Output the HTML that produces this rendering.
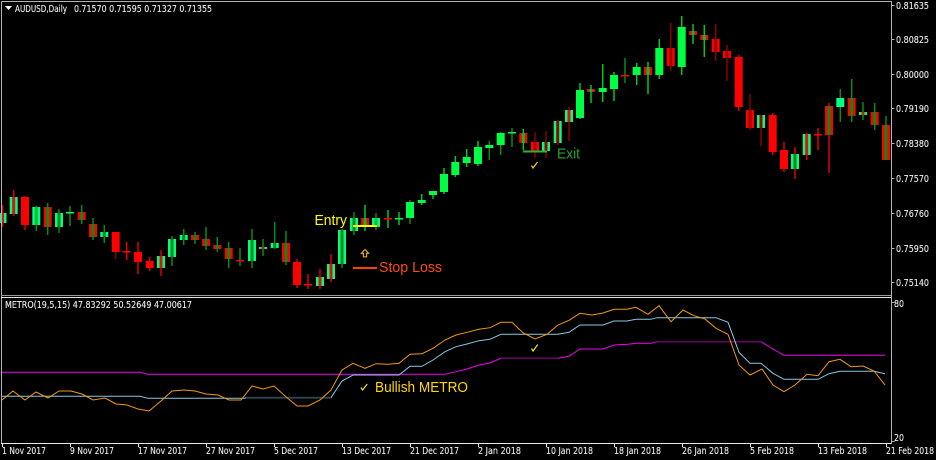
<!DOCTYPE html>
<html lang="en">
<head>
<meta charset="utf-8">
<title>AUDUSD Daily</title>
<style>
html,body{margin:0;padding:0;background:#000;width:936px;height:460px;overflow:hidden}
svg{display:block}
.t{font-family:"DejaVu Sans","Liberation Sans",sans-serif;font-size:9.3px;fill:#ececec;stroke:#ececec;stroke-width:.12}
.a{font-family:"Liberation Sans",sans-serif;font-size:15px}
</style>
</head>
<body>
<svg width="936" height="460" viewBox="0 0 936 460" xmlns="http://www.w3.org/2000/svg">
<rect width="936" height="460" fill="#000"/>

<!-- wicks -->
<g fill="none" stroke-width="1.5">
<path stroke="#e00000" d="M2.5 205V227M13.7 190V216M25 196V230M126.7 242V260M138 242V274M149.7 257V271M161 250V276M297 259V288M308 274V289M320 269V289M331 254V282M738.7 55V111M772.7 113V155M784 142V172M795 147V179M806.7 133V160M818 128V150M829 103V173"/>
<path stroke="#0b8a14" d="M36.3 206V231M47.7 203V235M59 209V233M70 206V226M81.7 205V224M93 218V240M104.3 225V243M172 236V266M183.7 229V245M195 232V244M206 227V250M217.3 237V252M228.7 242V268M240 248V266M252 229V268M263 239V256M274.7 222V249M286 231V265M342 229V268M354 212V235M376 213V230M410 200V224M489.3 141V160M500.7 132V155M512 128V147M625 58V83M840.3 89V122M851.7 79V122M863 102V120M874.7 103V130M886 116V160"/>
<path stroke="#00c81e" d="M365 205V231M388 210V228M399 212V225M421.7 194V205M433 191V199M444 168V194M455.3 156V177M466.7 149V167M478 141V166M523.3 129V150M580 83V119M591 85V103M602.7 64V102M614 72V101M636.7 63V85M648 62V94M659.3 39V79M681.7 16V75M693 24V44M704.3 25V57"/>
<path stroke="#8a0000" d="M115.7 232V259M535 132V158M546 131V158M557.7 120V145M569 107V141M670.7 23V71M715.7 24V61M727 45V81M750 94V130M761 115V146"/>
</g>

<!-- bodies -->
<path fill="#00ff44" d="M406 202h8V218h-8zM417.7 200h8V203h-8zM429 191h8V195h-8zM440 174h8V192h-8zM451.3 162h8V175h-8zM462.7 157h8V163h-8zM474 147h8V164h-8zM485.3 145h8V148h-8zM496.7 133h8V145h-8zM576 90h8V118h-8zM598.7 88h8V92h-8zM610 75h8V89h-8zM632.7 67h8V75h-8zM655.3 48h8V75h-8zM677.7 27h8V67h-8zM66 212h8V213.5h-8zM508 132h8V133.5h-8zM395 218h8V219.5h-8z"/>
<path fill="#00ff80" d="M-1.5 213h8V223h-8zM9.7 197h8V214h-8zM32.3 207h8V225h-8zM55 213h8V227h-8zM100.3 232h8V237h-8zM157 256h8V268h-8zM168 239h8V257h-8zM179.7 235h8V240h-8zM248 240h8V261h-8zM259 247h8V249h-8zM270.7 243h8V248h-8zM316 277h8V286h-8zM327 264h8V279h-8zM338 230h8V264h-8zM350 218h8V231h-8zM372 218h8V227h-8zM542 142h8V151h-8zM553.7 121h8V143h-8zM565 110h8V122h-8zM757 115h8V128h-8zM791 154h8V169h-8zM802.7 134h8V155h-8zM836.3 98h8V107h-8zM859 112h8V115h-8z"/>
<path fill="#ff0000" d="M21 197h8V225h-8zM43.7 207h8V227h-8zM77.7 212h8V220h-8zM89 224h8V237h-8zM111.7 232h8V252h-8zM134 252h8V262h-8zM145.7 261h8V268h-8zM191 235h8V240h-8zM202 239h8V246h-8zM213.3 245h8V249h-8zM224.7 248h8V259h-8zM282 243h8V262h-8zM293 262h8V285h-8zM361 218h8V226h-8zM519.3 133h8V143h-8zM531 142h8V151h-8zM587 89h8V92h-8zM644 67h8V75h-8zM666.7 48h8V66h-8zM689 31h8V35h-8zM700.3 35h8V40h-8zM711.7 39h8V52h-8zM723 51h8V58h-8zM734.7 57h8V107h-8zM746 110h8V128h-8zM768.7 115h8V152h-8zM780 150h8V169h-8zM825 106h8V135h-8zM847.7 98h8V116h-8zM870.7 112h8V125h-8zM882 125h8V160h-8zM122.7 251h8V252.5h-8zM236 260h8V261.5h-8zM304 284h8V285.5h-8zM384 218h8V219.5h-8zM621 75h8V76.5h-8zM814 134h8V135.5h-8z"/>

<!-- centre stripes -->
<path fill="#0a8a18" d="M46.2 207h3V227h-3zM57.5 213h3V227h-3zM80.2 212h3V220h-3zM91.5 224h3V237h-3zM102.8 232h3V237h-3zM170.5 239h3V257h-3zM182.2 235h3V240h-3zM193.5 235h3V240h-3zM204.5 239h3V246h-3zM215.8 245h3V249h-3zM227.2 248h3V259h-3zM250.5 240h3V261h-3zM273.2 243h3V248h-3zM284.5 243h3V262h-3zM340.5 230h3V264h-3zM352.5 218h3V231h-3zM793.5 154h3V169h-3zM827.5 106h3V135h-3zM850.2 98h3V116h-3zM873.2 112h3V125h-3zM884.5 125h3V160h-3z"/>
<path fill="#00c030" d="M34.8 207h3V225h-3zM374.5 218h3V227h-3zM363.5 218h3V226h-3zM521.8 133h3V143h-3zM589.5 89h3V92h-3zM646.5 67h3V75h-3zM691.5 31h3V35h-3zM702.8 35h3V40h-3z"/>
<path fill="#e01010" d="M1 213h3V223h-3zM12.2 197h3V214h-3zM159.5 256h3V268h-3zM261.5 247h3V249h-3zM318.5 277h3V286h-3zM329.5 264h3V279h-3zM567.5 110h3V122h-3zM805.2 134h3V155h-3zM861.5 112h3V115h-3z"/>
<path fill="#a00000" d="M533.5 142h3V151h-3zM544.5 142h3V151h-3zM556.2 121h3V143h-3zM669.2 48h3V66h-3zM714.2 39h3V52h-3zM725.5 51h3V58h-3zM748.5 110h3V128h-3zM759.5 115h3V128h-3z"/>

<!-- frames -->
<g fill="none" stroke="#b4b4b4" stroke-width="1">
<path d="M1.5 1.5H891.5V443.5H1.5V295.5"/>
<path d="M1.5 1.5V295.5"/>
<path d="M1 295.5H891" stroke="#9a9a9a"/>
<path d="M1 297.5H891" stroke="#e4e4e4"/>
<path d="M1 443.5H891" stroke="#e8e8e8"/>
<path d="M891.5 5.5h3M891.5 39.5h3M891.5 74.5h3M891.5 108.5h3M891.5 143.5h3M891.5 178.5h3M891.5 213.5h3M891.5 248.5h3M891.5 282.5h3M891.5 302.5h3M891.5 441.5h3"/>
<path stroke="#e8e8e8" d="M2.5 444v3M70.5 444v3M138.5 444v3M206.5 444v3M274.5 444v3M342.5 444v3M410.5 444v3M478.5 444v3M546.5 444v3M614.5 444v3M682.5 444v3M750.5 444v3M818.5 444v3M886.5 444v3"/>
</g>

<!-- header -->
<path d="M5 6h7l-3.5 4z" fill="#fff"/>
<text class="t" x="15" y="12" textLength="52" lengthAdjust="spacingAndGlyphs">AUDUSD,Daily</text>
<text class="t" x="74" y="12" textLength="138" lengthAdjust="spacingAndGlyphs">0.71570 0.71595 0.71327 0.71355</text>

<!-- annotations -->
<text class="a" x="314.5" y="225" fill="#ffff00" textLength="32.5" lengthAdjust="spacingAndGlyphs">Entry</text>
<path d="M353 226H377" stroke="#ffff00" stroke-width="2"/>
<path d="M353 268H377" stroke="#ff4000" stroke-width="2"/>
<text class="a" x="379" y="272" fill="#ff4a10" textLength="63" lengthAdjust="spacingAndGlyphs">Stop Loss</text>
<path d="M523 151.5H547" stroke="#2fb52f" stroke-width="2"/>
<text class="a" x="557" y="158.5" fill="#29a329" textLength="23" lengthAdjust="spacingAndGlyphs">Exit</text>
<path d="M531.5 165.5l1.5 2.5 4.5-6" fill="none" stroke="#f0d020" stroke-width="1.2"/>
<path d="M365 249.5l-3.5 3.8h1.9v3.5h3.2v-3.5h1.9z" fill="none" stroke="#e0a820" stroke-width="1.2"/>

<!-- indicator lines -->
<g fill="none" stroke-width="1">
<path stroke="#f400f4" d="M2 372.3H140L148 374.3H445L456 371.7L467 369L479 365L490 363L501 358.3H558L569 356.3L580 349H603L614 345L628 344.3L636 343.3H651L657 341.7H761L773 349L784 355.3H885"/>
<path stroke="#5c0a5c" d="M501 358.3H558M657 341.7H761"/>
<path stroke="#87c8e4" d="M2 396.3H140L148 398.3H245L246 397.7H331L342 381L353 375H399L410 366.3H422L433 360L445 351.7L456 346.7L467 344L479 340.7L490 339.3L501 334.3H558L569 332.3L580 325H603L614 321L627 321L636 319.3H651L657 317.7H716L728 322.3L739 352.3L750 363.3H761L773 373.3L784 379.3H818L829 373.7L840 371.3H874L885 373.7"/>
<path stroke="#2a424c" stroke-width="2" d="M246 397.7H331"/>
<path stroke="#f09a10" d="M2 400L13 391L25 400L36 392L48 398L59 391L71 391L82 394L93 400L105 398L116 404L127 405L138 409L149 411L161 401L172 391L184 390L195 391L206 394L218 395L229 400L241 400L252 386L263 389L274 386L285 396L297 406L308 406L320 400L331 390L342 370L353 363.3L365 368.3L376 363.7L388 364.3L399 363.3L410 354.3L422 353.7L433 348.3L445 340L456 335L467 332.3L479 329.3L490 327.7L501 322.3L512 322.3L523 332.7L535 339L547 334.3L558 325L569 320.3L580 313.3L592 315L603 313L614 309.3L627 309.3L636 307.3L648 314.3L659 305.7L671 321.7L683 310L694 315.7L705 319L716 328.3L728 334.3L739 365L750 375L762 369L773 385L784 391.7L795 385L807 374.3L818 375.7L829 361.7L840 359.3L851 366.7L863 366L874 371L885 385"/>
</g>
<text class="t" x="5" y="308" textLength="187" lengthAdjust="spacingAndGlyphs">METRO(19,5,15) 47.83292 50.52649 47.00617</text>
<text class="a" x="375" y="392" fill="#ffd700" textLength="93" lengthAdjust="spacingAndGlyphs">Bullish METRO</text>
<path d="M361 387.5l1.6 2.5 4.6-6" fill="none" stroke="#f4e020" stroke-width="1.2"/>
<path d="M531.5 348.5l1.6 2.5 4.6-6.5" fill="none" stroke="#f4e020" stroke-width="1.2"/>

<!-- price axis -->
<text class="t" x="896" y="9" textLength="33" lengthAdjust="spacingAndGlyphs">0.81635</text>
<text class="t" x="896" y="43" textLength="33" lengthAdjust="spacingAndGlyphs">0.80825</text>
<text class="t" x="896" y="78" textLength="33" lengthAdjust="spacingAndGlyphs">0.80000</text>
<text class="t" x="896" y="112" textLength="33" lengthAdjust="spacingAndGlyphs">0.79190</text>
<text class="t" x="896" y="147" textLength="33" lengthAdjust="spacingAndGlyphs">0.78380</text>
<text class="t" x="896" y="182" textLength="33" lengthAdjust="spacingAndGlyphs">0.77570</text>
<text class="t" x="896" y="217" textLength="33" lengthAdjust="spacingAndGlyphs">0.76760</text>
<text class="t" x="896" y="252" textLength="33" lengthAdjust="spacingAndGlyphs">0.75950</text>
<text class="t" x="896" y="286" textLength="33" lengthAdjust="spacingAndGlyphs">0.75140</text>
<text class="t" x="894" y="307" textLength="10" lengthAdjust="spacingAndGlyphs">80</text>
<text class="t" x="894" y="441" textLength="10" lengthAdjust="spacingAndGlyphs">20</text>

<!-- date axis -->
<text class="t" x="2" y="454" textLength="44" lengthAdjust="spacingAndGlyphs">1 Nov 2017</text>
<text class="t" x="70" y="454" textLength="44" lengthAdjust="spacingAndGlyphs">9 Nov 2017</text>
<text class="t" x="138" y="454" textLength="49" lengthAdjust="spacingAndGlyphs">17 Nov 2017</text>
<text class="t" x="206" y="454" textLength="49" lengthAdjust="spacingAndGlyphs">27 Nov 2017</text>
<text class="t" x="274" y="454" textLength="44" lengthAdjust="spacingAndGlyphs">5 Dec 2017</text>
<text class="t" x="342" y="454" textLength="49" lengthAdjust="spacingAndGlyphs">13 Dec 2017</text>
<text class="t" x="410" y="454" textLength="49" lengthAdjust="spacingAndGlyphs">21 Dec 2017</text>
<text class="t" x="478" y="454" textLength="43" lengthAdjust="spacingAndGlyphs">2 Jan 2018</text>
<text class="t" x="546" y="454" textLength="47" lengthAdjust="spacingAndGlyphs">10 Jan 2018</text>
<text class="t" x="614" y="454" textLength="47" lengthAdjust="spacingAndGlyphs">18 Jan 2018</text>
<text class="t" x="682" y="454" textLength="47" lengthAdjust="spacingAndGlyphs">26 Jan 2018</text>
<text class="t" x="750" y="454" textLength="44" lengthAdjust="spacingAndGlyphs">5 Feb 2018</text>
<text class="t" x="818" y="454" textLength="49" lengthAdjust="spacingAndGlyphs">13 Feb 2018</text>
<text class="t" x="886" y="454" textLength="48" lengthAdjust="spacingAndGlyphs">21 Feb 2018</text>
</svg>
</body>
</html>
